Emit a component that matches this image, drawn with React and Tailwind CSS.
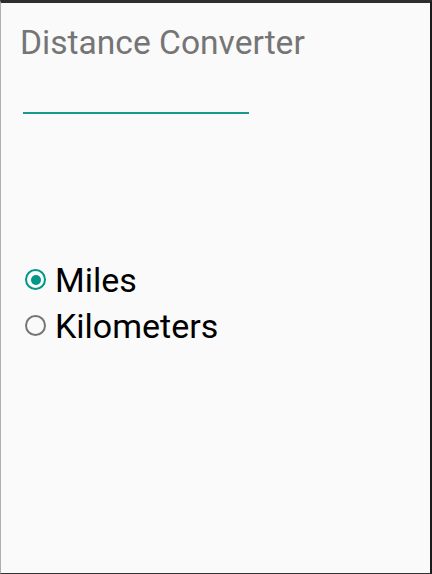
import { useState } from 'react';

const RadioRow = ({ label, checked, onSelect }) => (
    <button onClick={onSelect} className="flex items-center h-[46px] text-left">
        <span className={`w-[21px] h-[21px] rounded-full border-[2.5px] flex items-center justify-center ${checked ? 'border-[#009688]' : 'border-[#757575]'}`}>
            {checked && <span className="w-[10px] h-[10px] rounded-full bg-[#009688]" />}
        </span>
        <span className="ml-[9px] text-[34px] leading-none text-black">{label}</span>
    </button>
);

export default function App() {
    const [unit, setUnit] = useState('miles');

    return (
        <div className="w-[432px] h-[574px] bg-[#fafafa] border-t-[3px] border-t-[#2e2e2e] border-l border-l-[#b0b0b0] border-r-2 border-r-[#1a1a1a] border-b border-b-[#333] flex flex-col" style={{ fontFamily: 'Roboto, "Liberation Sans", sans-serif' }}>
            <h1 className="mt-[23px] ml-[19px] text-[33.6px] leading-none text-[#757575]">Distance Converter</h1>

            {/* input line */}
            <div className="mt-[52px] ml-[22px] w-[226px] border-b-2 border-[#149b8d]" />

            <div className="mt-[143px] ml-[24px] flex flex-col">
                <RadioRow label="Miles" checked={unit === 'miles'} onSelect={() => setUnit('miles')} />
                <RadioRow label="Kilometers" checked={unit === 'km'} onSelect={() => setUnit('km')} />
            </div>
        </div>
    );
}
